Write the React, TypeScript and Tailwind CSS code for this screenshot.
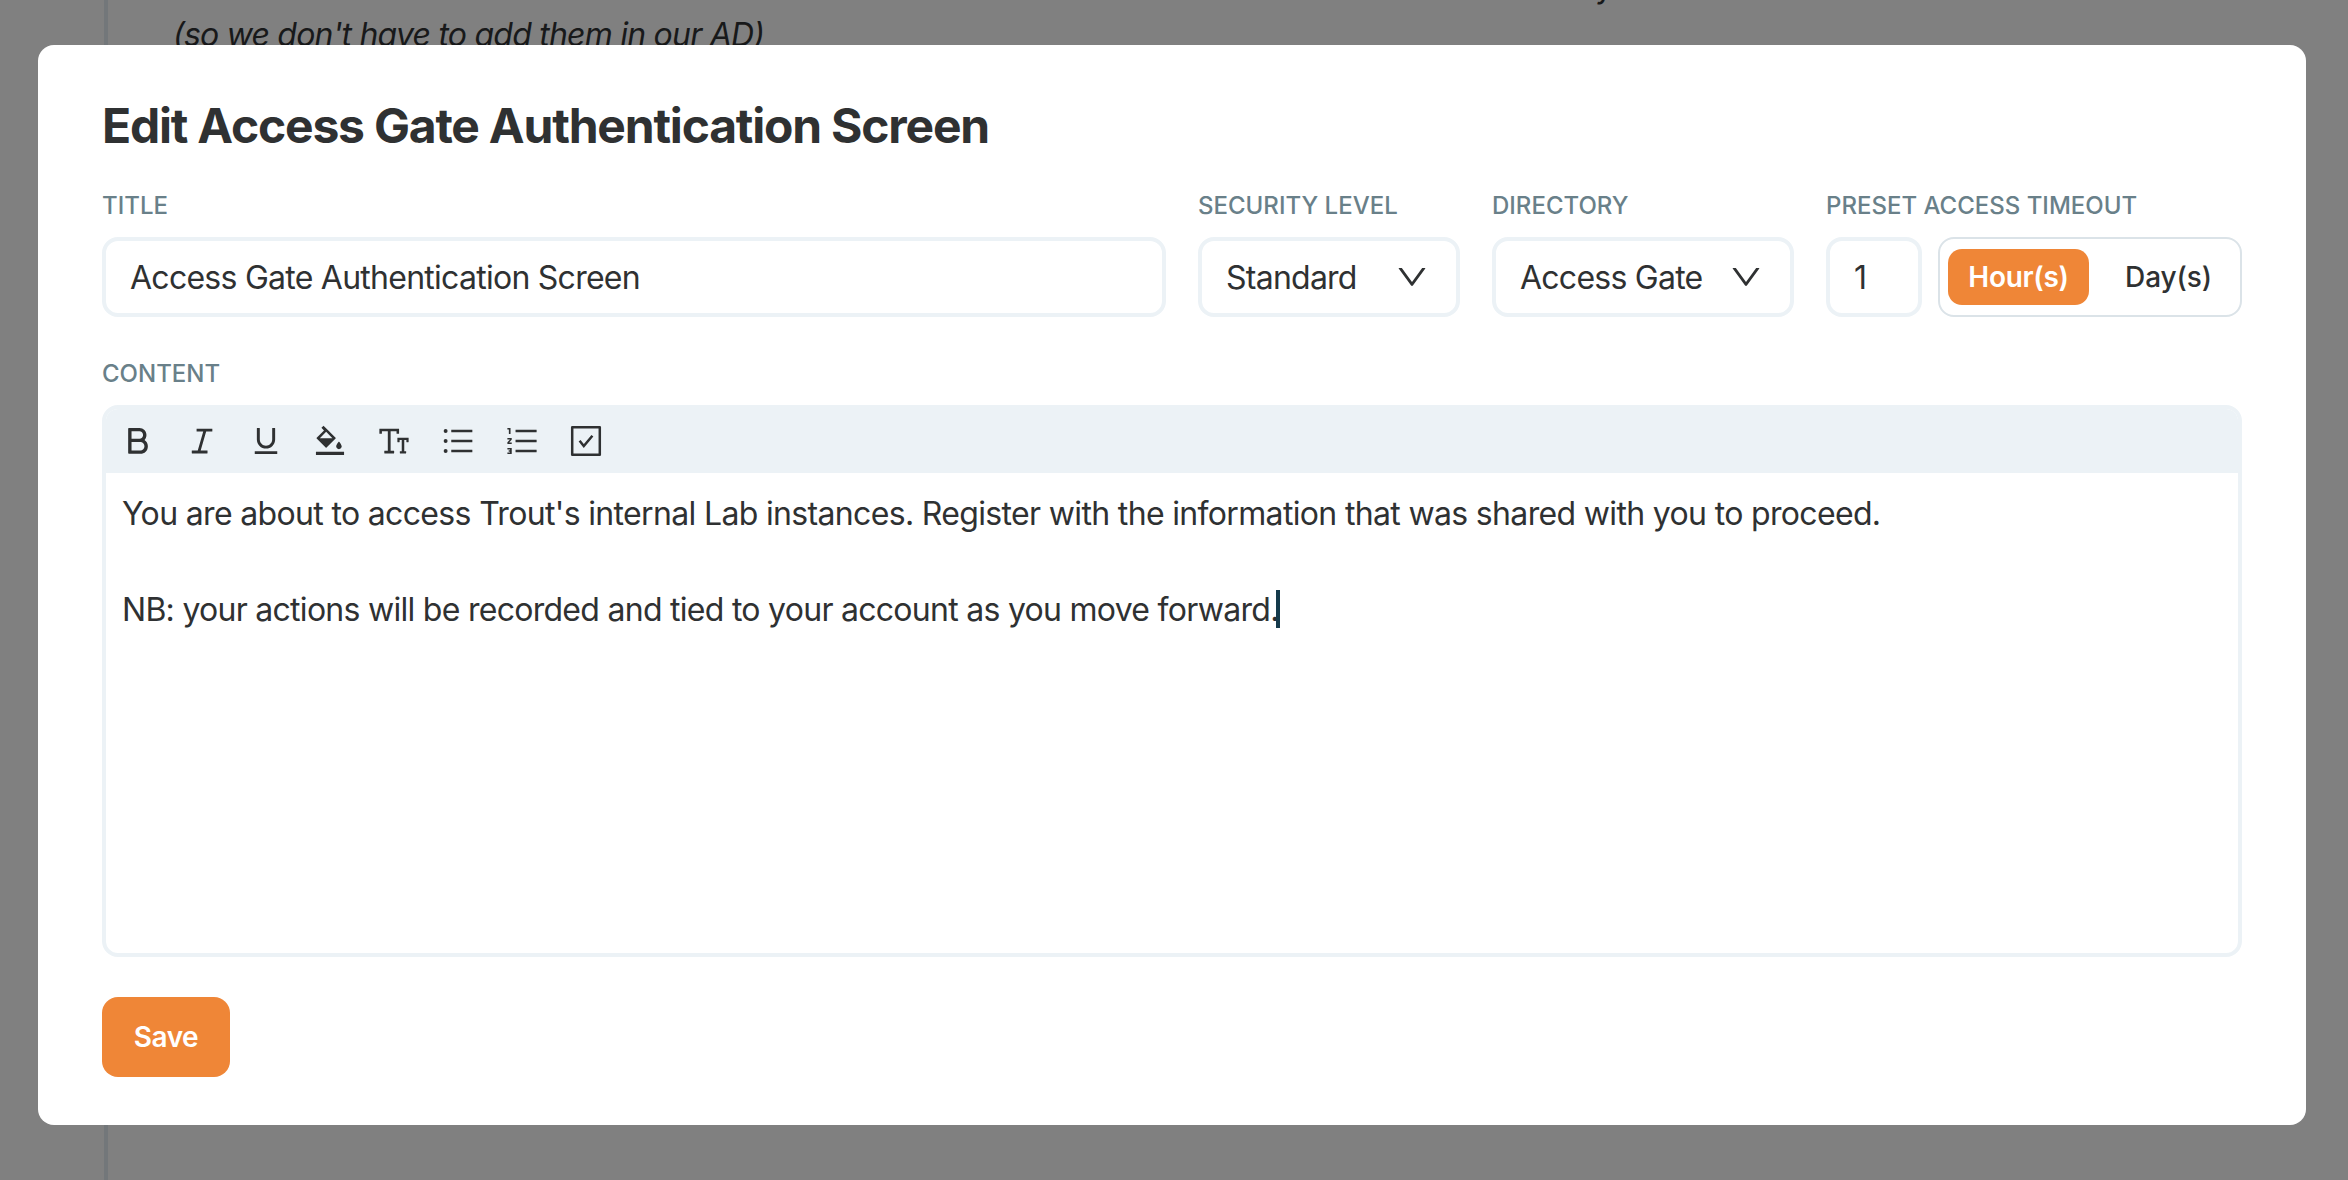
import type { ReactNode } from "react";
import {
  AiOutlineBold,
  AiOutlineItalic,
  AiOutlineUnderline,
  AiOutlineBgColors,
  AiOutlineFontSize,
  AiOutlineUnorderedList,
  AiOutlineOrderedList,
  AiOutlineDown,
} from "react-icons/ai";

function Field({ label, className, children }: { label: string; className: string; children: ReactNode }) {
  return (
    <div className={className}>
      <div className="mb-[13px] h-9 whitespace-nowrap text-[24px] font-medium leading-9 text-[#698089]">{label}</div>
      {children}
    </div>
  );
}

function Select({ value }: { value: string }) {
  return (
    <button className="flex h-20 w-full items-center justify-between rounded-2xl border-4 border-[#ecf2f6] pl-6 pr-[26px]">
      <span className="whitespace-nowrap pt-0.5 tracking-[-0.75px]">{value}</span>
      <AiOutlineDown className="size-9" />
    </button>
  );
}

function CheckboxIcon() {
  return (
    <svg className="size-9" viewBox="0 0 36 36" fill="none" stroke="currentColor">
      <rect x="4.2" y="4.2" width="27.6" height="27.6" strokeWidth="2.5" strokeLinejoin="round" />
      <path d="M11.6 17.8l4.2 5.2 8.6-10.2" strokeWidth="2.5" />
    </svg>
  );
}

export default function App() {
  return (
    <div className="relative h-[1180px] w-[2348px] overflow-hidden bg-[#808080] font-['Inter',sans-serif] text-[32px] text-[#2f3132]">
      <div className="absolute left-[104px] top-0 h-full w-1 bg-[#73777a]" />
      <div className="absolute left-[173px] top-[13px] whitespace-nowrap text-[32px] italic leading-[44px] tracking-[-0.78px] text-[#18191a]">
        (so we don't have to add them in our AD)
      </div>
      <div className="absolute left-[1595px] top-[-33px] text-[32px] leading-10 text-[#18191a]">y</div>

      <main className="absolute left-[38px] top-[45px] flex h-[1080px] w-[2268px] flex-col items-start rounded-2xl bg-white px-16 pt-[51px]">
        <h1 className="mb-8 h-[60px] whitespace-nowrap text-[48px] font-bold leading-[60px] tracking-[-1.2px]">
          Edit Access Gate Authentication Screen
        </h1>

        <div className="flex w-full gap-8">
          <Field label="TITLE" className="w-[1064px]">
            <div className="flex h-20 items-center rounded-2xl border-4 border-[#ecf2f6] px-6">
              <span className="whitespace-nowrap pt-0.5 tracking-[-0.74px]">Access Gate Authentication Screen</span>
            </div>
          </Field>
          <Field label="SECURITY LEVEL" className="w-[262px]">
            <Select value="Standard" />
          </Field>
          <Field label="DIRECTORY" className="w-[302px]">
            <Select value="Access Gate" />
          </Field>
          <Field label="PRESET ACCESS TIMEOUT" className="w-[416px]">
            <div className="flex gap-4">
              <div className="flex h-20 w-24 items-center rounded-2xl border-4 border-[#ecf2f6] px-6 pt-0.5">1</div>
              <div className="flex h-20 w-[304px] items-center rounded-2xl border-2 border-[#dbe3e8] px-2 text-[28px] font-medium">
                <button className="flex h-14 w-[141px] items-center justify-center rounded-[14px] bg-[#ef8637] font-semibold tracking-[-0.3px] text-white">
                  Hour(s)
                </button>
                <button className="flex h-14 flex-1 items-center justify-center pl-4 tracking-[-0.1px]">Day(s)</button>
              </div>
            </div>
          </Field>
        </div>

        <Field label="CONTENT" className="mt-[39px] w-full">
          <div className="h-[552px] overflow-hidden rounded-2xl border-4 border-[#ecf2f6]">
            <div className="flex h-16 items-center gap-7 bg-[#ecf2f6] pl-[14px]">
              <AiOutlineBold className="size-9" />
              <AiOutlineItalic className="size-9" />
              <AiOutlineUnderline className="size-9" />
              <AiOutlineBgColors className="size-9" />
              <AiOutlineFontSize className="size-9" />
              <AiOutlineUnorderedList className="size-9" />
              <AiOutlineOrderedList className="size-9" />
              <CheckboxIcon />
            </div>
            <div className="px-4 pt-[17px] leading-[48px]">
              <p className="whitespace-nowrap tracking-[-0.66px]">
                You are about to access Trout's internal Lab instances. Register with the information that was shared with you to proceed.
              </p>
              <p className="mt-12 flex items-center whitespace-nowrap tracking-[-0.72px]">
                <span>NB: your actions will be recorded and tied to your account as you move forward.</span>
                <span className="-ml-[3px] mb-0.5 h-[38px] w-1 bg-[#153a4b]" />
              </p>
            </div>
          </div>
        </Field>

        <button className="mt-10 flex h-20 w-32 items-center justify-center rounded-2xl bg-[#ef8637] text-[28px] font-semibold tracking-[-0.5px] text-white">
          Save
        </button>
      </main>
    </div>
  );
}
